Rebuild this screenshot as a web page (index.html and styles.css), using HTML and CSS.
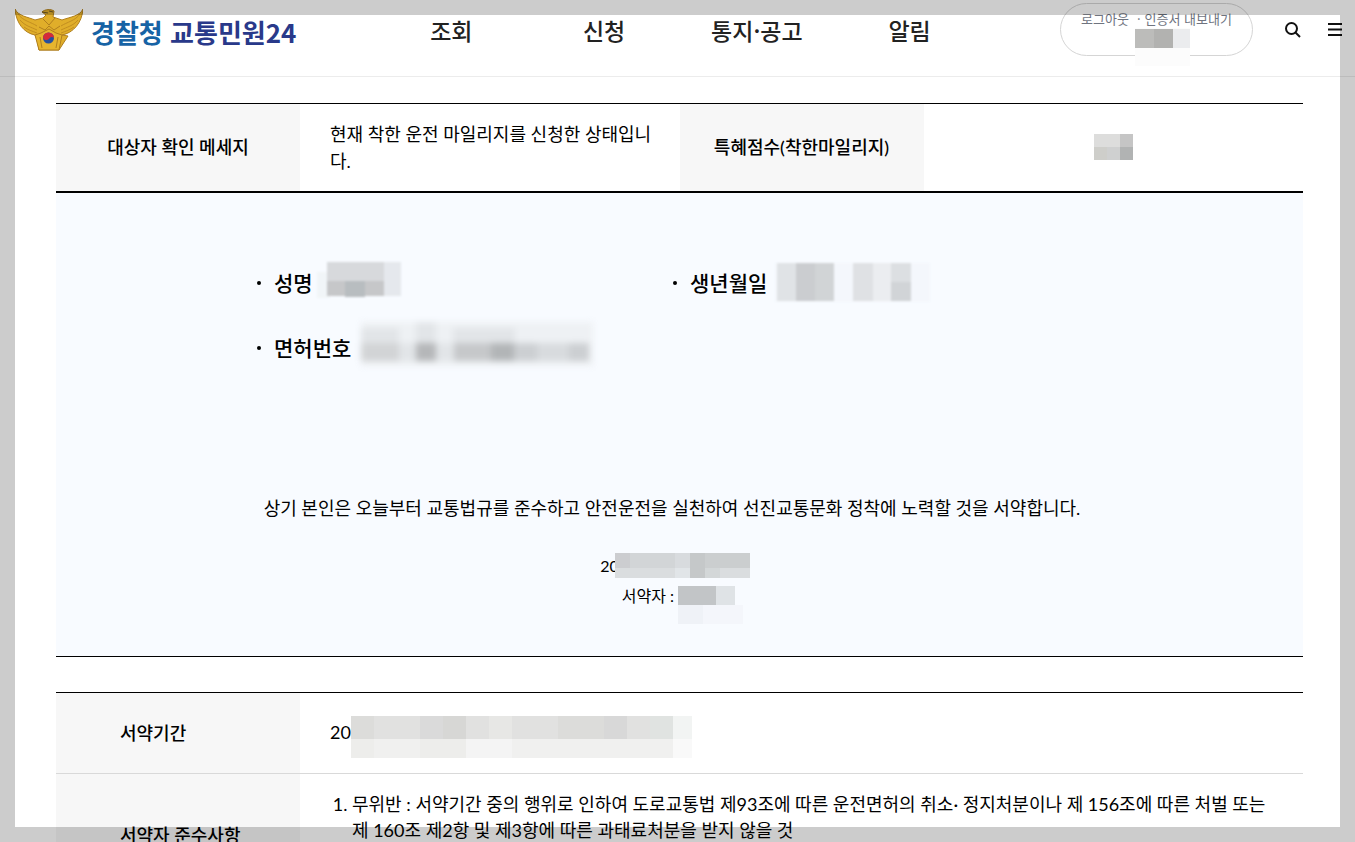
FILE: index.html
```
<!DOCTYPE html>
<html lang="ko">
<head>
    <meta charset="UTF-8">
    <meta name="viewport" content="width=device-width, initial-scale=1.0">
    <title>경찰청 교통민원24</title>
    <link rel="stylesheet" href="styles.css">
</head>
<body>
<header class="header">
    <a class="logo" href="#">
        <svg class="emblem" viewBox="0 0 68 42" aria-hidden="true">
            <path d="M0 0C3 7 13 8 20 11L28 9L31 6L27 3C30 0 36 0 39 2L38 8L47 11C55 8 65 7 68 0C67 14 58 24 47 26L53 27L44 41H24L22 30L20 26C9 24 1 14 0 0Z" fill="#e0ae2a" stroke="#b07f1e" stroke-width="1"/>
            <path d="M3 5C8 12 16 13 22 17M5 11C10 17 16 18 22 21M9 18C13 21 17 22 22 24M65 5C60 12 52 13 46 17M63 11C58 17 52 18 46 21M59 18C55 21 51 22 46 24" fill="none" stroke="#c28e20" stroke-width="1"/>
            <path d="M20 26L24 41H44L47 26L41 24L34 20L26 24Z" fill="#e6b52e" stroke="#b07f1e" stroke-width="1"/>
            <path d="M28 10L34 16L40 9M24 18L30 21L34 17L39 21L45 17M25 28L27 39M43 28L41 39" fill="none" stroke="#b07f1e" stroke-width="1"/>
            <path d="M27 3L33 4M34 2L38 3" stroke="#6c5526" stroke-width="1"/>
            <circle cx="33.500" cy="29" r="5.500" fill="#26509d"/>
            <path d="M28 29A5.500 5.500 0 0 1 39 29C37 27 35 28 34 30C32 32 29 31 28 29Z" fill="#d52b39"/>
        </svg>
        <span class="logo-text"><span class="logo-police">경찰청</span> 교통민원24</span>
    </a>
    <nav class="menu">
        <a href="#">조회</a>
        <a href="#">신청</a>
        <a href="#">통지·공고</a>
        <a href="#">알림</a>
    </nav>
    <div class="tools">
        <div class="account">
            <div class="account-links"><a href="#">로그아웃</a><span>·</span><a href="#">인증서 내보내기</a></div>
            <svg class="mosaic" width="55" height="22" aria-hidden="true">
                <path fill="#fcfcfc" d="M0 0h55v38H0z"/>
                <path fill="#bcbcba" d="M0 1h19v19H0z"/>
                <path fill="#b2b2b0" d="M19 1h19v19H19z"/>
                <path fill="#ebecee" d="M38 1h17v19H38z"/>
            </svg>
        </div>
        <button class="icon-button" type="button" aria-label="검색">
            <svg width="16" height="16" viewBox="0 0 16 16" fill="none" stroke="#111" stroke-width="2"><circle cx="6.500" cy="6.500" r="5.500"/><path d="M10.500 10.500L15 15"/></svg>
        </button>
        <button class="icon-button" type="button" aria-label="전체메뉴">
            <svg width="14" height="13" viewBox="0 0 14 13" fill="none" stroke="#111" stroke-width="2"><path d="M0 1h14M0 6.500h14M0 12h14"/></svg>
        </button>
    </div>
</header>

<main class="content">
    <table class="status">
        <tr>
            <th scope="row">대상자 확인 메세지</th>
            <td>현재 착한 운전 마일리지를 신청한 상태입니다.</td>
            <th scope="row">특혜점수(착한마일리지)</th>
            <td class="score">
                <svg class="mosaic" width="39" height="28" aria-hidden="true">
                    <path fill="#dddddc" d="M0 0h26v13H0z"/>
                    <path fill="#c5c5c5" d="M26 0h13v13H26z"/>
                    <path fill="#cececa" d="M0 13h13v13H0z"/>
                    <path fill="#cfd0d0" d="M13 13h13v13H13z"/>
                    <path fill="#b1b3b3" d="M26 13h13v13H26z"/>
                </svg>
            </td>
        </tr>
    </table>

    <section class="pledge">
        <ul class="person">
            <li>성명
                <svg class="mosaic soft" width="90" height="50" aria-hidden="true">
                    <path fill="#f1f5f8" d="M-4 14h13v26H-4z"/>
                    <path fill="#d7d9dc" d="M6 4h57v20H6z"/>
                    <path fill="#e5e8ed" d="M63 4h17v34H63z"/>
                    <path fill="#c6c7c9" d="M6 23h57v15H6z"/>
                    <path fill="#b8bdc0" d="M24 23h20v16H24z"/>
                </svg>
            </li>
            <li>생년월일
                <svg class="mosaic soft" width="155" height="46" aria-hidden="true">
                    <path fill="#f4f7fc" d="M0 3h155v39H0z"/>
                    <path fill="#e0e3e6" d="M2 3h19v38H2z"/>
                    <path fill="#cbcdd0" d="M21 3h19v38H21z"/>
                    <path fill="#d1d4d6" d="M40 3h19v38H40z"/>
                    <path fill="#dfe1e4" d="M78 3h20v38H78z"/>
                    <path fill="#ebedf0" d="M98 3h18v38H98z"/>
                    <path fill="#dcdfe2" d="M116 3h20v19h-20z"/>
                    <path fill="#d1d4d7" d="M116 22h20v19h-20z"/>
                </svg>
            </li>
            <li>면허번호
                <svg class="mosaic softer" width="232" height="52" aria-hidden="true">
                    <path fill="#eef1f4" d="M2 0h232v44H2z"/>
                    <path fill="#e2e5e8" d="M2 6h38v15H2zM57 0h20v21H57zM94 6h62v15H94z"/>
                    <path fill="#d2d4d6" d="M2 21h38v18H2z"/>
                    <path fill="#e2e5e8" d="M40 21h17v18H40zM77 21h18v18H77z"/>
                    <path fill="#b5b7b9" d="M57 21h20v18H57z"/>
                    <path fill="#c6c8ca" d="M95 21h37v18H95z"/>
                    <path fill="#b2b5b7" d="M132 21h23v18h-23z"/>
                    <path fill="#cccfd2" d="M155 21h23v18h-23z"/>
                    <path fill="#d8dbde" d="M178 21h32v18h-32z"/>
                    <path fill="#cccfd2" d="M210 21h20v18h-20z"/>
                </svg>
            </li>
        </ul>
        <p class="oath">상기 본인은 오늘부터 교통법규를 준수하고 안전운전을 실천하여 선진교통문화 정착에 노력할 것을 서약합니다.</p>
        <div class="signature">
            <p>20<svg class="mosaic date" width="135" height="27" aria-hidden="true">
                <path fill="#d2d5d7" d="M0 0h135v15H0z"/>
                <path fill="#dadddf" d="M0 15h135v10H0z"/>
                <path fill="#cccdd0" d="M0 0h15v15H0z"/>
                <path fill="#d8dbde" d="M60 0h15v15H60z"/>
                <path fill="#c5c8c9" d="M75 0h15v25H75z"/>
                <path fill="#cbcecf" d="M90 0h45v15H90z"/>
                <path fill="#e1e5e8" d="M60 15h15v10H60z"/>
                <path fill="#d3d7d8" d="M90 15h15v10H90z"/>
            </svg></p>
            <p><span>서약자 :</span>
                <svg class="mosaic signer" width="50" height="20" aria-hidden="true">
                    <path fill="#eff2f7" d="M0 19h25v19H0z"/>
                    <path fill="#f4f6fb" d="M25 19h40v19H25z"/>
                    <path fill="#c2c5c7" d="M0 0h38v19H0z"/>
                    <path fill="#dfe3e6" d="M38 0h19v19H38z"/>
                </svg>
            </p>
        </div>
    </section>

    <table class="terms">
        <tr>
            <th scope="row">서약기간</th>
            <td>
                <span class="period">20<svg class="mosaic" width="341" height="42" aria-hidden="true">
                    <path fill="#e1e1e0" d="M0 0h322v23H0z"/>
                    <path fill="#f0f0ef" d="M0 23h322v19H0z"/>
                    <path fill="#dcdcda" d="M0 0h23v23H0z"/>
                    <path fill="#dadada" d="M69 0h23v23H69z"/>
                    <path fill="#d7d7d5" d="M92 0h23v23H92z"/>
                    <path fill="#e7e7e5" d="M138 0h23v23h-23z"/>
                    <path fill="#dcdcda" d="M207 0h46v23h-46z"/>
                    <path fill="#d8d8d8" d="M253 0h23v23h-23z"/>
                    <path fill="#e0e3e1" d="M299 0h23v23h-23z"/>
                    <path fill="#f2f4f3" d="M322 0h19v23h-19z"/>
                    <path fill="#ededeb" d="M0 23h23v19H0zM69 23h46v19H69z"/>
                    <path fill="#f4f4f4" d="M115 23h46v19h-46z"/>
                    <path fill="#f9f9f9" d="M322 23h19v19h-19z"/>
                </svg></span>
            </td>
        </tr>
        <tr class="rules">
            <th scope="row">서약자 준수사항</th>
            <td>
                <ol>
                    <li>무위반 : 서약기간 중의 행위로 인하여 도로교통법 제93조에 따른 운전면허의 취소· 정지처분이나 제 156조에 따른 처벌 또는 제 160조 제2항 및 제3항에 따른 과태료처분을 받지 않을 것</li>
                </ol>
            </td>
        </tr>
    </table>
</main>
<div class="frame"></div>
</body>
</html>
```
FILE: styles.css
```
* {
    box-sizing: border-box;
}
body {
    margin: 0;
    height: 100vh;
    overflow: hidden;
    background: #fff;
    color: #000;
    font-family: Lato, "Noto Sans CJK KR", sans-serif;
    font-size: 18px;
    line-height: 27px;
}
a {
    color: inherit;
    text-decoration: none;
}
p, ul, ol {
    margin: 0;
    padding: 0;
}
.mosaic {
    overflow: visible;
    vertical-align: middle;
    shape-rendering: crispEdges;
}
.soft {
    filter: blur(1px);
}
.softer {
    filter: blur(3px);
}

/* 상단 */
.header {
    display: grid;
    grid-template-columns: 360px 1fr auto;
    height: 77px;
    padding: 3px 13px 0 15px;
    border-bottom: 1px solid #ececec;
    font-family: "Noto Sans CJK KR", sans-serif;
}
.logo {
    display: flex;
    align-items: center;
    gap: 8px;
    height: 54px;
}
.emblem {
    width: 68px;
    height: 42px;
}
.logo-text {
    padding-top: 4px;
    color: #29398a;
    font-size: 26px;
    font-weight: 700;
    line-height: 40px;
    white-space: nowrap;
}
.logo-police {
    color: #1763a5;
}
.menu {
    display: grid;
    grid-template-columns: repeat(4, 1fr);
    align-items: center;
    height: 54px;
    margin-right: 74px;
    color: #222;
    font-size: 23px;
    font-weight: 500;
    text-align: center;
}
.tools {
    display: flex;
    align-items: center;
    height: 53px;
}
.account {
    display: flex;
    flex-direction: column;
    align-items: center;
    width: 193px;
    height: 53px;
    padding: 6px 0 0 12px;
    border: 1px solid #d5d5d5;
    border-radius: 27px;
}
.account-links {
    display: flex;
    gap: 4px;
    margin-right: 12px;
    color: #6f747f;
    font-size: 13px;
    line-height: 18px;
}
.account-links span {
    margin-left: 4px;
}
.icon-button {
    display: flex;
    margin-left: 27px;
    padding: 0;
    border: 0;
    background: none;
}
.icon-button:first-of-type {
    margin-left: 32px;
}

/* 본문 */
.content {
    padding: 26px 52px 0 56px;
}
table {
    width: 100%;
    border-collapse: separate;
    border-spacing: 0;
    table-layout: fixed;
    border-top: 1px solid #000;
}
th {
    background: #f7f7f7;
    font-weight: 500;
}
td {
    padding: 0 24px 0 30px;
}
.status {
    height: 90px;
    border-bottom: 2px solid #000;
}
.status th {
    width: 244px;
}
.status .score {
    padding: 0;
    text-align: center;
}
.pledge {
    padding: 57px 215px 45px 200px;
    border-bottom: 1px solid #000;
    background: #f8fbff;
}
.person {
    display: grid;
    grid-template-columns: repeat(2, 1fr);
    list-style: none;
    font-size: 21px;
    font-weight: 500;
}
.person li {
    display: flex;
    align-items: center;
    gap: 8px;
    height: 65px;
    white-space: nowrap;
}
.person li::before {
    content: "";
    width: 4px;
    height: 4px;
    margin: 0 5px 0 1px;
    border-radius: 2px;
    background: #000;
}
.oath {
    margin: 114px 0 29px;
    line-height: 28px;
    text-align: center;
}
.signature {
    padding-left: 6px;
    font-size: 16px;
    line-height: 30px;
}
.signature p {
    display: flex;
    align-items: center;
    justify-content: center;
    height: 30px;
}
.date {
    margin-left: -4px;
}
.signer {
    margin-left: 4px;
}
.terms {
    margin-top: 35px;
}
.terms th {
    width: 244px;
    padding: 0 0 0 64px;
    text-align: left;
}
.terms td, .terms th {
    height: 81px;
    border-bottom: 1px solid #d9d9d9;
}
.period {
    display: flex;
    align-items: flex-start;
    padding-top: 7px;
    line-height: 32px;
}
.terms .rules td {
    height: 124px;
    padding-top: 17px;
    vertical-align: top;
}
.rules ol {
    padding-left: 22px;
    line-height: 26px;
}

/* 화면 테두리 */
.frame {
    position: fixed;
    inset: 0;
    border: 15px solid rgba(0, 0, 0, 0.2);
    pointer-events: none;
}
```
